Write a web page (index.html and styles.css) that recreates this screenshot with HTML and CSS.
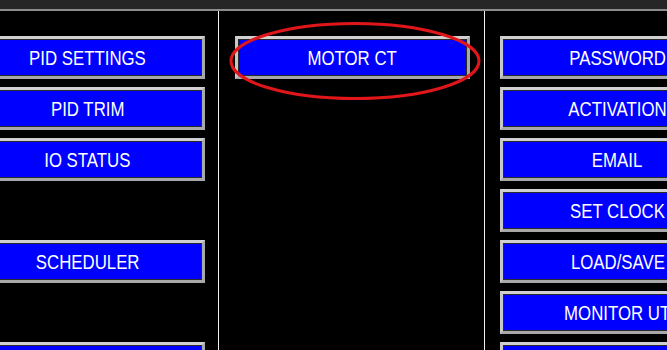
FILE: index.html
```html
<!DOCTYPE html>
<html>
<head>
<meta charset="utf-8">
<link rel="stylesheet" href="styles.css">
</head>
<body>
<div class="topbar"></div>
<div class="panel">
  <div class="col col-left">
    <div class="btn"><span>PID SETTINGS</span></div>
    <div class="btn"><span>PID TRIM</span></div>
    <div class="btn"><span>IO STATUS</span></div>
    <div class="slot"></div>
    <div class="btn"><span>SCHEDULER</span></div>
    <div class="slot"></div>
    <div class="btn"><span></span></div>
  </div>
  <div class="col col-mid">
    <div class="btn"><span>MOTOR CT</span></div>
    <svg class="ring" width="254" height="82" viewBox="0 0 254 82">
      <ellipse cx="127" cy="41" rx="124" ry="37.5" fill="none" stroke="#e0161a" stroke-width="3"/>
    </svg>
  </div>
  <div class="col col-right">
    <div class="btn"><span>PASSWORD</span></div>
    <div class="btn"><span>ACTIVATION</span></div>
    <div class="btn"><span>EMAIL</span></div>
    <div class="btn"><span>SET CLOCK</span></div>
    <div class="btn"><span>LOAD/SAVE</span></div>
    <div class="btn"><span>MONITOR UT</span></div>
    <div class="btn"><span></span></div>
  </div>
</div>
</body>
</html>
```
FILE: styles.css
```css
html, body {
  margin: 0;
  padding: 0;
  background: #000;
  overflow: hidden;
  width: 667px;
  height: 350px;
}
.topbar {
  height: 9px;
  background: #262626;
  border-bottom: 2px solid #8c8c8c;
}
.panel {
  display: grid;
  grid-template-columns: 218px 266px 1fr;
  height: 339px;
}
.col {
  display: flex;
  flex-direction: column;
  gap: 8px;
  padding-top: 25px;
  position: relative;
}
.col-left .btn {
  margin-left: -30px;
}
.col-mid {
  border-left: 1px solid #f0f0f0;
  padding-left: 16px;
}
.col-right {
  border-left: 1px solid #f0f0f0;
  padding-left: 15px;
}
.slot {
  height: 43px;
  flex: none;
}
.btn {
  flex: none;
  box-sizing: border-box;
  width: 235px;
  height: 43px;
  background: #0000ff;
  border: 3px solid #a8a8a8;
  border-top-color: #d0d0d0;
  border-left-color: #c8c8c8;
  box-shadow: inset 0 0 0 1px #2a2a2a;
  display: flex;
  align-items: center;
  justify-content: center;
  overflow: hidden;
}
.btn span {
  display: inline-block;
  color: #fff;
  font-family: "Liberation Sans", Arial, sans-serif;
  font-size: 20px;
  line-height: 20px;
  white-space: nowrap;
  transform: scaleX(0.84);
}
.ring {
  position: absolute;
  left: 9px;
  top: 9px;
}
```
